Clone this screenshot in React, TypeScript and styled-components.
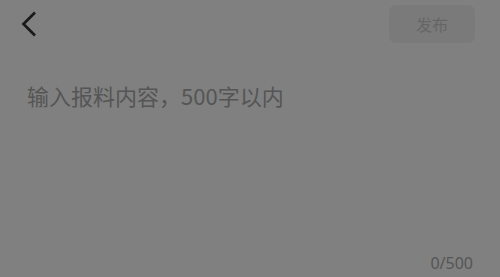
import React, { useState } from 'react';
import styled, { createGlobalStyle } from 'styled-components';

const GlobalStyle = createGlobalStyle`
  html, body {
    margin: 0;
    padding: 0;
    background: #808080;
  }
  body {
    font-family: "Noto Sans CJK SC", "Noto Sans", sans-serif;
  }
`;

const StyledPage = styled.div`
  width: 500px;
  height: 277px;
  display: flex;
  flex-direction: column;
  background: #808080;
  overflow: hidden;
`;

const StyledHeader = styled.div`
  height: 48px;
  display: flex;
  align-items: center;
  justify-content: space-between;
  padding: 0 25px 0 17px;
  box-sizing: border-box;
`;

const StyledBack = styled.button`
  width: 24px;
  height: 28px;
  padding: 0;
  border: none;
  background: transparent;
  display: flex;
  align-items: center;
  justify-content: center;
  margin-top: -1px;
`;

const StyledPublish = styled.button<{ active: boolean }>`
  width: 86px;
  height: 38px;
  border: none;
  border-radius: 7px;
  background: ${({ active }) => (active ? '#e5484d' : '#7a7a7a')};
  color: ${({ active }) => (active ? '#fff' : '#666666')};
  font-family: "Noto Sans CJK SC", sans-serif;
  font-size: 16px;
  margin-top: -1px;
`;

const StyledBody = styled.div`
  flex: 1;
  display: flex;
  flex-direction: column;
  padding: 0 25px 0 27px;
`;

const StyledInput = styled.textarea`
  flex: 1;
  margin-top: 31px;
  padding: 0;
  border: none;
  background: transparent;
  resize: none;
  outline: none;
  font-family: "Noto Sans CJK SC", sans-serif;
  font-size: 22px;
  line-height: 32px;
  color: #333;

  &::placeholder {
    color: #555555;
  }
`;

const StyledCount = styled.div`
  align-self: flex-end;
  font-family: "Noto Sans", sans-serif;
  font-size: 16px;
  color: #555555;
  line-height: 20px;
  margin-bottom: 4px;
  margin-right: 2px;
`;

const App: React.FC = () => {
  const [text, setText] = useState<string>('');
  return (
    <StyledPage>
      <GlobalStyle />
      <StyledHeader>
        <StyledBack>
          <svg width="16" height="26" viewBox="0 0 16 26">
            <path d="M14 1.5 L2.5 13 L14 24.5" fill="none" stroke="#1a1a1a" strokeWidth="2.7" />
          </svg>
        </StyledBack>
        <StyledPublish active={text.length > 0}>发布</StyledPublish>
      </StyledHeader>
      <StyledBody>
        <StyledInput
          value={text}
          maxLength={500}
          placeholder="输入报料内容，500字以内"
          onChange={(e) => setText(e.target.value)}
        />
        <StyledCount>{text.length}/500</StyledCount>
      </StyledBody>
    </StyledPage>
  );
};

export default App;
